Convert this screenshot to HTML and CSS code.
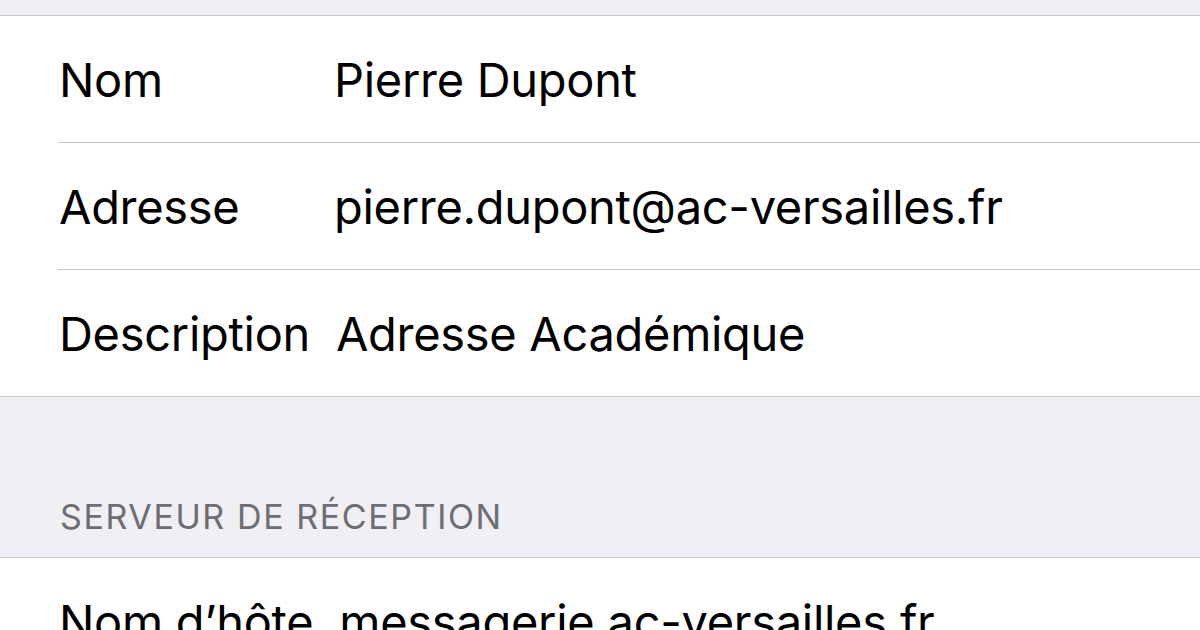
FILE: index.html
```html
<!DOCTYPE html>
<html lang="fr">
<head>
    <meta charset="UTF-8">
    <meta name="viewport" content="width=device-width, initial-scale=1.0">
    <title>Compte</title>
    <link rel="stylesheet" href="styles.css">
</head>
<body>
    <div class="spacer-top"></div>

    <div class="group">
        <div class="cell">
            <div class="cell-inner">
                <span class="label">Nom</span>
                <span class="value">Pierre Dupont</span>
            </div>
        </div>
        <div class="cell">
            <div class="cell-inner">
                <span class="label">Adresse</span>
                <span class="value">pierre.dupont@ac-versailles.fr</span>
            </div>
        </div>
        <div class="cell">
            <div class="cell-inner">
                <span class="label">Description</span>
                <span class="value">Adresse Académique</span>
            </div>
        </div>
    </div>

    <div class="section-header">SERVEUR DE RÉCEPTION</div>

    <div class="group">
        <div class="cell">
            <div class="cell-inner">
                <span class="label">Nom d’hôte</span>
                <span class="value">messagerie.ac-versailles.fr</span>
            </div>
        </div>
    </div>
</body>
</html>
```

FILE: styles.css
```css
body {
    margin: 0;
    background-color: #efeff4;
    font-family: 'Inter', 'Roboto', sans-serif;
    color: #000;
    overflow: hidden;
}

.spacer-top {
    height: 15px;
}

.group {
    background-color: #fff;
    border-top: 1px solid #c8c7cc;
    border-bottom: 1px solid #c8c7cc;
}

.cell {
    padding-left: 58px;
}

.cell-inner {
    display: flex;
    align-items: center;
    height: 126px;
    border-bottom: 1px solid #c8c7cc;
    font-size: 47px;
    letter-spacing: -0.3px;
}

.cell:last-child .cell-inner {
    border-bottom: none;
}

.label {
    min-width: 249px;
    padding-left: 1px;
    margin-right: 26px;
    white-space: nowrap;
}

.value {
    white-space: nowrap;
}

.section-header {
    height: 160px;
    box-sizing: border-box;
    display: flex;
    align-items: flex-end;
    padding: 0 0 20px 60px;
    font-size: 34px;
    letter-spacing: 1.6px;
    color: #6d6d72;
}
```
